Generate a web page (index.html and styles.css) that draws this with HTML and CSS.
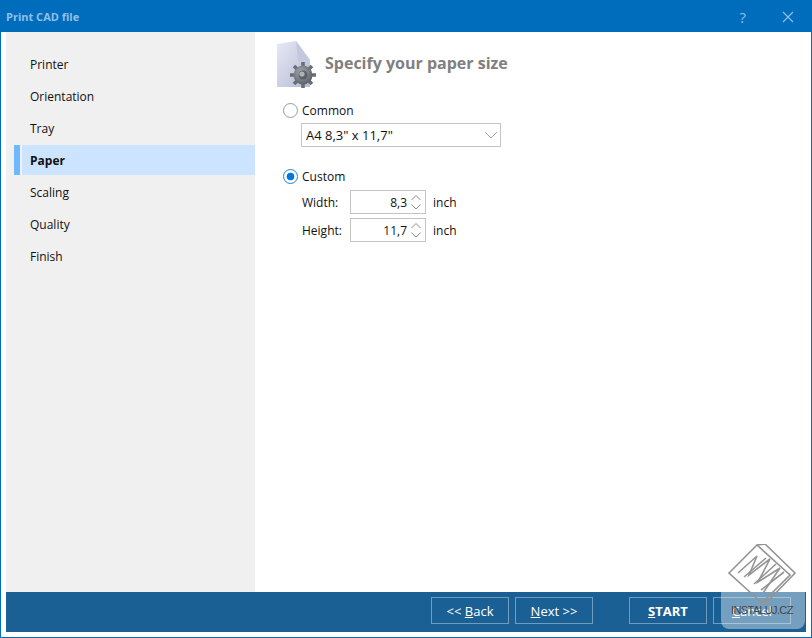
FILE: index.html
```html
<!DOCTYPE html>
<html>
<head>
    <meta charset="utf-8">
    <title>Print CAD file</title>
    <link rel="stylesheet" href="styles.css">
</head>
<body>
<div class="window">
    <div class="titlebar">
        <span class="title">Print CAD file</span>
        <span class="help">?</span>
        <svg class="close" width="12" height="12" viewBox="0 0 12 12"><path d="M1 1L11 11M11 1L1 11" stroke="#8fc0e8" stroke-width="1.2" fill="none"/></svg>
    </div>
    <div class="main">
        <ul class="steps">
            <li class="step"><i class="mark"></i><span class="step-label">Printer</span></li>
            <li class="step"><i class="mark"></i><span class="step-label">Orientation</span></li>
            <li class="step"><i class="mark"></i><span class="step-label">Tray</span></li>
            <li class="step active"><i class="mark"></i><span class="step-label">Paper</span></li>
            <li class="step"><i class="mark"></i><span class="step-label">Scaling</span></li>
            <li class="step"><i class="mark"></i><span class="step-label">Quality</span></li>
            <li class="step"><i class="mark"></i><span class="step-label">Finish</span></li>
        </ul>
        <div class="content">
            <div class="heading">
                <svg class="doc-icon" width="40" height="48" viewBox="0 0 40 48">
                    <defs>
                        <linearGradient id="paper" x1="0" y1="0" x2="1" y2="1">
                            <stop offset="0" stop-color="#e6e9f6"/>
                            <stop offset="1" stop-color="#b4bad2"/>
                        </linearGradient>
                        <radialGradient id="gear" cx="0.4" cy="0.35" r="0.8">
                            <stop offset="0" stop-color="#a2a6b0"/>
                            <stop offset="1" stop-color="#50545c"/>
                        </radialGradient>
                    </defs>
                    <path d="M0 3L19 0L33 19V46L0 46Z" fill="url(#paper)"/>
                    <path d="M19 0L33 19L21 20Z" fill="#c3c8de"/>
                    <g stroke="#696d76" stroke-width="3.6">
                        <path d="M26 21V47M13 34H39M17 25L35 43M35 25L17 43"/>
                    </g>
                    <circle cx="26" cy="34" r="9.500" fill="url(#gear)"/>
                    <circle cx="26" cy="34" r="4.500" fill="#5c6068"/>
                    <circle cx="25" cy="33" r="2.600" fill="#aeb2ba"/>
                </svg>
                <h1 class="heading-text">Specify your paper size</h1>
            </div>
            <div class="option">
                <span class="radio"></span>
                <span>Common</span>
            </div>
            <div class="select">
                <span class="select-value">A4 8,3" x 11,7"</span>
                <svg width="14" height="8" viewBox="0 0 14 8"><path d="M1 1L7 7L13 1" stroke="#a8a8a8" fill="none"/></svg>
            </div>
            <div class="option option-custom">
                <span class="radio checked"></span>
                <span>Custom</span>
            </div>
            <div class="field">
                <span class="field-label">Width:</span>
                <div class="spin">
                    <span class="spin-value">8,3</span>
                    <svg width="12" height="16" viewBox="0 0 12 16"><path d="M1.500 6L6 1.500L10.500 6M1.500 10.500L6 15L10.500 10.500" stroke="#8a8a8a" fill="none"/></svg>
                </div>
                <span>inch</span>
            </div>
            <div class="field">
                <span class="field-label">Height:</span>
                <div class="spin">
                    <span class="spin-value">11,7</span>
                    <svg width="12" height="16" viewBox="0 0 12 16"><path d="M1.500 6L6 1.500L10.500 6M1.500 10.500L6 15L10.500 10.500" stroke="#8a8a8a" fill="none"/></svg>
                </div>
                <span>inch</span>
            </div>
        </div>
    </div>
    <div class="footer">
        <button class="btn">&lt;&lt; <u>B</u>ack</button>
        <button class="btn btn-next"><u>N</u>ext &gt;&gt;</button>
        <button class="btn btn-start"><u>S</u>TART</button>
        <button class="btn btn-cancel"><u>C</u>ancel</button>
    </div>
</div>
<div class="watermark">
    <svg class="wm-logo" width="70" height="64" viewBox="0 0 70 64">
        <g fill="none" stroke="#949494" stroke-width="1.600">
            <path d="M1 29L29 1L62 31L34 59Z"/>
            <path d="M29 1L37 0L67 29L37 60L34 59"/>
            <path d="M10 29L29 12L21 31L42 15L30 38L52 24L35 49"/>
            <path d="M16 33L38 14M26 40L48 20M33 46L56 28"/>
        </g>
    </svg>
    <span class="wm-text">INSTALUJ.CZ</span>
</div>
</body>
</html>
```

FILE: styles.css
```css
*{margin:0;padding:0;box-sizing:border-box;}
ul{list-style:none;}
html,body{
    width:812px;
    height:638px;
    overflow:hidden;
}
body{
    position:relative;
    font-family:"Open Sans","Noto Sans",sans-serif;
    font-size:12px;
    color:#111;
    background:#fff;
}
.window{
    display:flex;
    flex-direction:column;
    width:812px;
    height:638px;
    border:1px solid #006cbc;
    border-top:0;
}
.titlebar{
    display:flex;
    align-items:center;
    flex:none;
    height:32px;
    margin:0 -1px;
    padding:1px 18px 0 6px;
    background:#006cbc;
    color:#8fc0e8;
}
.title{
    flex:1;
    font-size:11px;
    font-weight:700;
}
.help{
    margin-right:36px;
    font-size:15px;
}
.main{
    display:flex;
    flex:1;
    min-height:0;
    padding-left:5px;
}
.steps{
    flex:none;
    width:249px;
    padding:17px 0 0 8px;
    background:#f0f0f0;
}
.step{
    display:flex;
    height:30px;
    margin-bottom:2px;
}
.mark{
    flex:none;
    width:6px;
    margin-right:2px;
}
.step-label{
    flex:1;
    padding:1px 0 0 8px;
    line-height:30px;
}
.active .mark{
    background:#70b8ff;
}
.active .step-label{
    background:#cce4ff;
    font-weight:700;
}
.content{
    flex:1;
    padding:9px 0 0 22px;
}
.heading{
    display:flex;
    align-items:center;
    height:48px;
}
.doc-icon{
    flex:none;
    margin-right:8px;
}
.heading-text{
    margin-bottom:4px;
    font-size:16px;
    font-weight:700;
    color:#808080;
}
.option{
    display:flex;
    align-items:center;
    height:20px;
    margin-top:11px;
    margin-left:6px;
}
.option-custom{
    margin-top:19px;
}
.radio{
    flex:none;
    width:15px;
    height:15px;
    margin-right:4px;
    border:1px solid #9a9a9a;
    border-radius:50%;
}
.checked{
    border:1px solid #1a86d8;
    background:radial-gradient(circle,#0078d7 0,#0078d7 3.500px,#fff 4.200px);
}
.select{
    display:flex;
    align-items:center;
    justify-content:space-between;
    width:200px;
    height:24px;
    margin:3px 0 0 24px;
    padding:0 2px 0 4px;
    border:1px solid #c4c4c4;
}
.select-value{
    font-size:13px;
}
.field{
    display:flex;
    align-items:center;
    height:24px;
    margin:4px 0 0 25px;
}
.field-label{
    width:48px;
}
.spin{
    display:flex;
    align-items:center;
    justify-content:flex-end;
    width:76px;
    height:24px;
    margin-right:7px;
    padding-right:3px;
    border:1px solid #c4c4c4;
}
.spin-value{
    margin-right:3px;
}
.footer{
    display:flex;
    flex:none;
    height:40px;
    margin:0 5px 5px;
    padding:5px 15px 0 425px;
    background:#1a6094;
}
.btn{
    width:78px;
    height:27px;
    margin-right:6px;
    border:1px solid #6f9cbf;
    background:none;
    color:#fff;
    font-family:inherit;
    font-size:13px;
}
.btn-next{
    margin-right:36px;
}
.btn-start{
    font-weight:700;
}
.btn-cancel{
    margin-right:0;
}
.watermark{
    position:absolute;
    left:721px;
    top:592px;
    width:84px;
    height:37px;
    background:rgba(255,255,255,.4);
    border-radius:0 0 8px 8px;
}
.wm-logo{
    position:absolute;
    left:7px;
    top:-48px;
}
.wm-text{
    position:absolute;
    left:10px;
    top:12px;
    font-family:"Liberation Sans",sans-serif;
    font-size:11px;
    letter-spacing:-.65px;
    color:#444;
}
```
